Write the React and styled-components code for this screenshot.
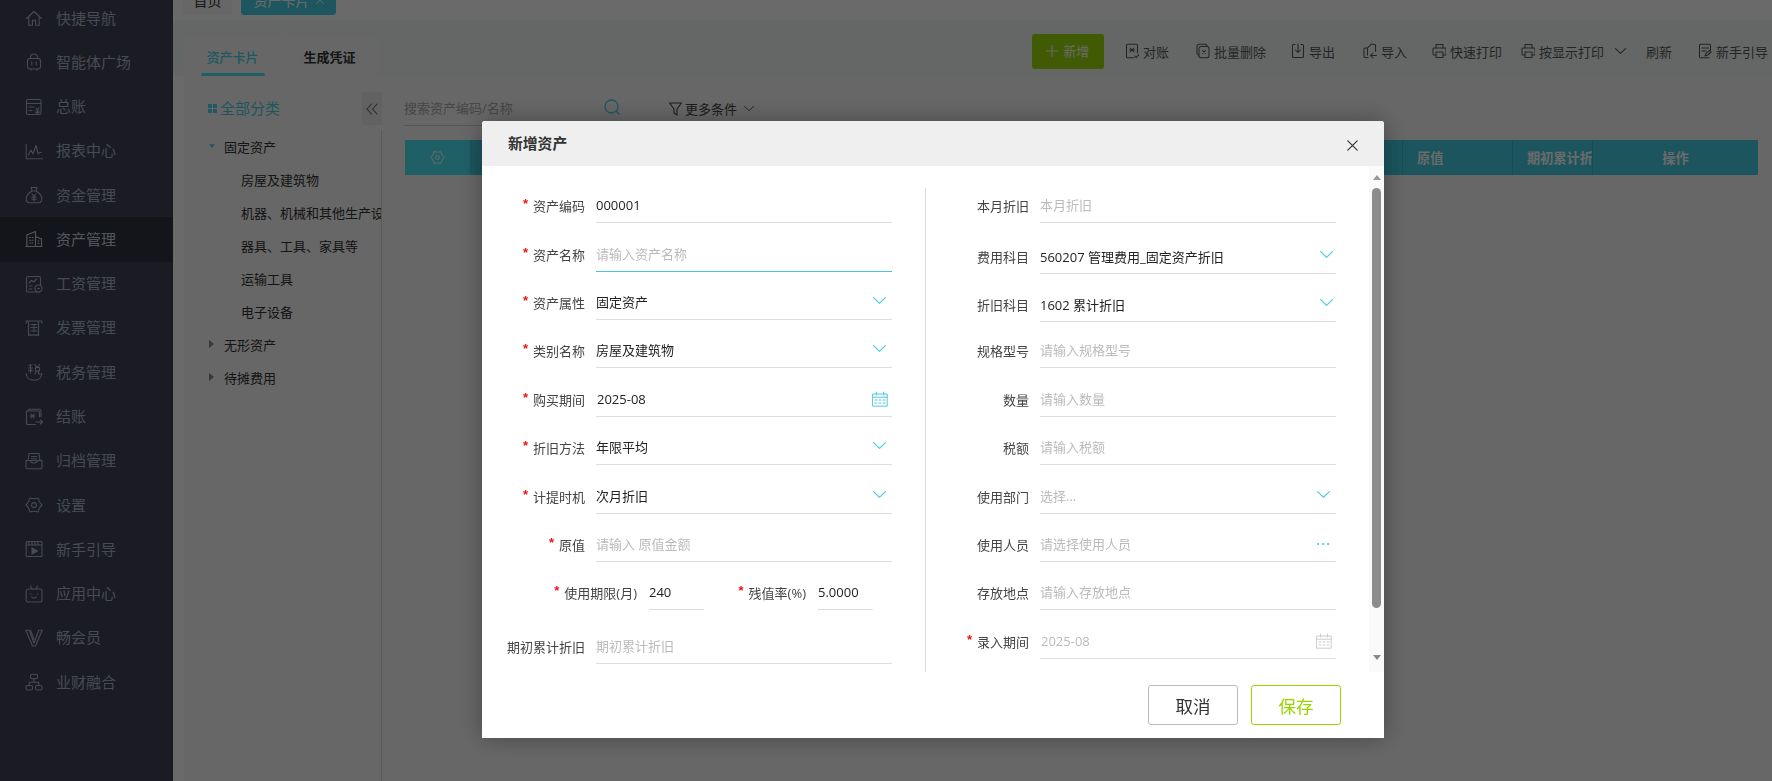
import React from "react";
import styled, { createGlobalStyle } from "styled-components";

const Global = createGlobalStyle`
  html, body { margin: 0; padding: 0; height: 100%; overflow: hidden; background: #fff; }
  * { box-sizing: border-box; }
  body { font-family: "Open Sans", "Noto Sans CJK SC", "Noto Sans", sans-serif; font-size: 13px; color: #333; }
`;

const Page = styled.div`
  display: flex;
  width: 1772px;
  height: 781px;
  overflow: hidden;
`;

const Sidebar = styled.nav`
  width: 173px;
  flex: none;
  background: #3f4154;
  overflow: hidden;
`;
const NavList = styled.ul`
  list-style: none;
  margin: -4px 0 0;
  padding: 0;
`;
const NavItem = styled.li`
  height: 44.27px;
  display: flex;
  align-items: center;
  padding-left: 25px;
  gap: 13px;
  font-size: 15px;
  background: ${(p) => (p.$active ? "#2e3340" : "transparent")};
  color: ${(p) => (p.$active ? "#c8d2dc" : "#a9b5c2")};
`;
const NavText = styled.span`
  margin-top: -2px;
`;
const Glyph = styled.svg`
  width: ${(p) => p.$size || 18}px;
  height: ${(p) => p.$size || 18}px;
  flex: none;
  fill: none;
  stroke: currentColor;
  stroke-width: ${(p) => p.$sw || 1.1};
  stroke-linecap: round;
  stroke-linejoin: round;
`;

const Main = styled.main`
  flex: 1;
  min-width: 0;
  display: flex;
  flex-direction: column;
  background: #fff;
`;
const TopStrip = styled.div`
  height: 20px;
  flex: none;
  display: flex;
  align-items: flex-end;
  gap: 9px;
  padding: 0 0 5px 10px;
  overflow: hidden;
  background: #fff;
`;
const PageTab = styled.div`
  height: 34px;
  flex: none;
  width: ${(p) => p.$w}px;
  padding-top: 4px;
  display: flex;
  align-items: center;
  justify-content: center;
  gap: 6px;
  font-size: 14px;
  border-radius: 0 0 3px 3px;
  background: ${(p) => (p.$on ? "#46cfe2" : "#f8f8f8")};
  color: ${(p) => (p.$on ? "#fff" : "#333")};
`;
const Band = styled.div`
  height: 56px;
  flex: none;
  display: flex;
  padding-left: 11px;
  background: #f2f7f5;
`;
const Tabs = styled.div`
  display: flex;
  align-self: flex-end;
`;
const SubTab = styled.div`
  position: relative;
  width: 97px;
  height: 39px;
  display: flex;
  align-items: center;
  justify-content: center;
  padding-bottom: 1px;
  background: #f8f8f8;
  border-radius: 6px 6px 0 0;
  font-size: 13px;
  color: ${(p) => (p.$on ? "#49d4e6" : "#333")};
  font-weight: ${(p) => (p.$on ? 500 : 700)};
  &::after {
    content: "";
    display: ${(p) => (p.$on ? "block" : "none")};
    position: absolute;
    left: 17px;
    right: 16px;
    bottom: 0;
    height: 3px;
    border-radius: 2px;
    background: #46e6f5;
  }
`;
const Toolbar = styled.div`
  margin-left: auto;
  display: flex;
  align-items: flex-start;
  padding: 14px 4px 0 0;
  color: #585858;
`;
const AddButton = styled.button`
  width: 72px;
  height: 35px;
  border: 0;
  border-radius: 3px;
  background: #98d900;
  color: #fff;
  font: inherit;
  font-size: 13px;
  display: flex;
  align-items: center;
  justify-content: center;
  gap: 5px;
  padding: 0 0 2px;
  margin-right: 1px;
  opacity: 0.95;
`;
const Tool = styled.div`
  height: 35px;
  display: flex;
  align-items: center;
  gap: 4px;
  padding-bottom: 1px;
  margin-left: ${(p) => p.$ml}px;
  white-space: nowrap;
  font-size: 13px;
`;
const ToolGap = styled.span`
  width: ${(p) => p.$w}px;
`;

const Card = styled.section`
  flex: 1;
  min-height: 0;
  margin-left: 11px;
  display: flex;
  background: #f7f7f7;
`;
const TreePanel = styled.aside`
  width: 198px;
  flex: none;
  display: flex;
  flex-direction: column;
  padding-top: 16px;
`;
const TreeHead = styled.div`
  height: 33px;
  flex: none;
  display: flex;
  align-items: center;
  padding-left: 24px;
  gap: 3px;
  font-size: 15px;
  color: #48cfe0;
`;
const TreeTitle = styled.span`
  margin-top: -2px;
`;
const GridDots = styled.i`
  width: 9px;
  height: 9px;
  flex: none;
  background:
    linear-gradient(#48d8ea, #48d8ea) 0 0 / 4px 4px no-repeat,
    linear-gradient(#48d8ea, #48d8ea) 100% 0 / 4px 4px no-repeat,
    linear-gradient(#48d8ea, #48d8ea) 0 100% / 4px 4px no-repeat,
    linear-gradient(#48d8ea, #48d8ea) 100% 100% / 4px 4px no-repeat;
`;
const Collapse = styled.div`
  margin-left: auto;
  width: 20px;
  height: 33px;
  display: flex;
  align-items: center;
  justify-content: center;
  border-radius: 3px 0 0 3px;
  background: #e9ecea;
  color: #666;
`;
const TreeBody = styled.div`
  flex: 1;
  margin-top: 5px;
  border-right: 1px solid #d6d6d6;
  overflow: hidden;
`;
const TreeRow = styled.div`
  height: 33px;
  display: flex;
  align-items: center;
  white-space: nowrap;
  padding-left: ${(p) => (p.$child ? 57 : 24)}px;
  padding-bottom: 1px;
  font-size: 13px;
  color: #333;
`;
const Caret = styled.span`
  width: 16px;
  flex: none;
  display: flex;
  align-items: center;
  padding-left: 1px;
  color: ${(p) => (p.$open ? "#46cfe2" : "#888")};
`;
const Content = styled.div`
  flex: 1;
  min-width: 0;
  display: flex;
  flex-direction: column;
  padding: 16px 14px 0 22px;
`;
const FilterBar = styled.div`
  height: 34px;
  flex: none;
  display: flex;
  align-items: center;
`;
const SearchBox = styled.div`
  width: 226px;
  height: 34px;
  padding-bottom: 3px;
  display: flex;
  align-items: center;
  justify-content: space-between;
  border-bottom: 1px solid #cfcfcf;
  color: #aaa;
  white-space: nowrap;
`;
const SearchIcon = styled.span`
  display: flex;
  margin-right: 10px;
  color: #46cfe2;
`;
const More = styled.div`
  margin-left: 39px;
  padding-bottom: 1px;
  display: flex;
  align-items: center;
  gap: 3px;
  color: #444;
`;
const TableHead = styled.div`
  margin: 14px 0 0 1px;
  height: 35px;
  flex: none;
  display: flex;
  background: #43cde1;
  color: #fff;
  font-weight: 700;
  font-size: 13.2px;
`;
const HeadCell = styled.div`
  width: ${(p) => p.$w}px;
  flex: ${(p) => (p.$grow ? 1 : "none")};
  display: flex;
  align-items: center;
  justify-content: ${(p) => (p.$center ? "center" : "flex-start")};
  padding-left: ${(p) => (p.$center ? 0 : 14)}px;
  border-right: ${(p) => (p.$noline ? "0" : "1px solid rgba(0,0,0,.12)")};
  overflow: hidden;
  white-space: nowrap;
  background: ${(p) => p.$bg || "transparent"};
`;

const Overlay = styled.div`
  position: fixed;
  inset: 0;
  background: rgba(0, 0, 0, 0.585);
`;
const Modal = styled.div`
  position: fixed;
  left: 482px;
  top: 121px;
  width: 902px;
  height: 617px;
  display: flex;
  flex-direction: column;
  background: #fff;
  border-radius: 3px 3px 0 0;
  box-shadow: 0 0 24px rgba(0, 0, 0, 0.32);
`;
const ModalHead = styled.header`
  height: 45px;
  flex: none;
  display: flex;
  align-items: center;
  justify-content: space-between;
  padding: 0 26px;
  background: #efefef;
  border-radius: 3px 3px 0 0;
`;
const ModalTitle = styled.h2`
  margin: 0 0 3px;
  font-size: 14.8px;
  font-weight: 700;
  color: #333;
`;
const CloseBtn = styled.span`
  display: flex;
  margin-top: 4px;
  color: #333;
`;
const ModalBody = styled.div`
  flex: none;
  height: 506px;
  display: flex;
  overflow: hidden;
`;
const Column = styled.div`
  width: ${(p) => p.$w}px;
  flex: none;
  margin-top: 22px;
  border-right: ${(p) => (p.$line ? "1px solid #ddd" : "0")};
`;
const Row = styled.div`
  height: ${(p) => p.$h}px;
  display: flex;
  align-items: flex-end;
`;
const Label = styled.label`
  width: ${(p) => p.$w || 103}px;
  height: 32px;
  flex: none;
  display: flex;
  align-items: center;
  justify-content: flex-end;
  padding-bottom: 3px;
  font-size: 13px;
  color: #444;
  white-space: nowrap;
`;
const Star = styled.span`
  color: #f01010;
  font-family: "Liberation Sans", sans-serif;
  font-size: 13px;
  font-weight: 700;
  margin-right: 5px;
  position: relative;
  top: -2px;
`;
const Field = styled.div`
  width: ${(p) => p.$w || 296}px;
  height: 32px;
  flex: none;
  margin-left: ${(p) => p.$ml || 11}px;
  padding-left: ${(p) => (p.$pad ? 1 : 0)}px;
  padding-bottom: ${(p) => (p.$low ? 2 : 4)}px;
  display: flex;
  align-items: center;
  justify-content: space-between;
  border-bottom: 1px solid ${(p) => (p.$focus ? "#4cc3da" : "#ddd")};
  color: ${(p) => (p.$ph ? "#bbb" : "#222")};
  font-size: 13px;
  white-space: nowrap;
`;
const Trail = styled.span`
  display: flex;
  margin-right: ${(p) => p.$r}px;
  margin-top: ${(p) => p.$t ?? -2}px;
  color: ${(p) => p.$c || "#4fcbe0"};
`;
const Scroll = styled.div`
  width: 15px;
  flex: none;
  display: flex;
  flex-direction: column;
  align-items: center;
  padding-top: 9px;
  background: #fafafa;
`;
const Arrow = styled.i`
  width: 0;
  height: 0;
  border-left: 4.5px solid transparent;
  border-right: 4.5px solid transparent;
  ${(p) => (p.$down ? "border-top: 5px solid #888; margin-top: 47px;" : "border-bottom: 5px solid #999;")}
`;
const Thumb = styled.div`
  width: 9px;
  height: 420px;
  margin-top: 8px;
  border-radius: 5px;
  background: #8c8c8c;
`;
const Footer = styled.footer`
  flex: 1;
  display: flex;
  justify-content: flex-end;
  gap: 13px;
  padding: 13px 43px 0 0;
`;
const Btn = styled.button`
  width: 90px;
  height: 40px;
  border-radius: 3px;
  background: #fff;
  font: inherit;
  font-size: 17.5px;
  padding: 0;
  color: ${(p) => (p.$primary ? "#98d400" : "#333")};
  border: 1px solid ${(p) => (p.$primary ? "#98d400" : "#bbb")};
`;

const gearPath = "M5 2Q9 3.4 13 2Q13.8 6 17 9Q13.8 12 13 16Q9 14.6 5 16Q4.2 12 1 9Q4.2 6 5 2Z";

const navIcons = {
  home: <><path d="M1.5 9.5 9 2.5l7.5 7"/><path d="M3.8 8v8.2h3.6v-5h3.2v5h3.6V8"/></>,
  bot: <><rect x="2.5" y="5.5" width="13" height="10.5" rx="2.5"/><path d="M5.5 5.5V4a3.5 3 0 0 1 7 0v1.5M6.8 9v3M11.2 9v3M6 16v1.3M12 16v1.3"/></>,
  ledger: <><rect x="1.5" y="1.5" width="14.5" height="15" rx="1.5"/><path d="M1.5 5.5h14.5M4 9h5M4 12.5h3"/><path d="m11 10 1.5 1.7L14 10M12.5 11.7V16M10.8 13h3.4M10.8 14.6h3.4"/></>,
  report: <><path d="M1.2 2v14.8h16.6"/><path d="M3.5 13 6 8l2 4 3-8.5 2.2 8.5 1.3-1.5h2"/></>,
  bag: <><path d="M6 1.5h6l-1 3.5H7zM7 5C3.5 7 1.2 10 1.2 13c0 2.5 1.5 3.7 3.5 3.7h8.6c2 0 3.5-1.2 3.5-3.7 0-3-2.3-6-5.8-8"/><path d="m7 8 2 2.4L11 8M9 10.4V15M6.8 11.3h4.4M6.8 13.2h4.4"/></>,
  building: <><path d="M1.8 16.5V5L10.5 1.5v15zM10.5 6.5l6 2.5v7.5h-6M1 16.5h16"/><path d="M4.5 7.5h1M7 7.5h1M4.5 10.2h1M7 10.2h1M4.5 13h1M7 13h1M13 11h1M13 13.5h1"/></>,
  pay: <><rect x="1.5" y="1.5" width="14" height="15.5" rx="1.5"/><path d="m4 8 2.5-2.5 2 1.5 3-3M4 11h3M4 14h3"/><circle cx="13.5" cy="13.5" r="3.5" fill="#3f4154"/><path d="M12.3 13.5h2.4"/></>,
  invoice: <><path d="M1.2 4V2h15.6v2M3.5 2v14.5l1.5-1 1.5 1 2-1 2 1 2-1 1 1V2"/><path d="M6 5.5h6M6 8.5h6M9 5.5v7M6 12h6"/></>,
  tax: <><path d="M1.2 10.5c0 4 3 6.8 7.8 6.8s7.8-2.8 7.8-6.8"/><path d="M4 2.5 7 1.7M5.5 2v8M3.5 5h4M3.5 8l2-1M7.5 8 5.5 7M10 1.5l1 2 2.5-.2.9-1.8M10.5 4.5h4V8h-4zM11.5 8 10 11M13.5 8v3h2"/></>,
  close: <><path d="M3.5 1.2h11a1.5 1.5 0 0 1 1.5 1.5v6M3.5 1.2V3M1.5 3h12a1 1 0 0 1 1 1v5M1.5 3v12.5a1 1 0 0 0 1 1h8"/><path d="m6 6 3 4M9 6l-3 4M5 8h5"/><path d="M11 14h6.5M15.5 12l2 2-2 2"/></>,
  archive: <><path d="M4 1.5h10l1 7H3z"/><path d="M6.5 4.5h5M6.5 6.7h5"/><path d="M1 8.5h4.5a3.5 2.5 0 0 0 7 0H17V15a1.7 1.7 0 0 1-1.7 1.7H2.7A1.7 1.7 0 0 1 1 15z"/></>,
  gear: <><path d={gearPath}/><circle cx="9" cy="9" r="2.4"/></>,
  clapper: <><rect x="1.2" y="1.5" width="15.8" height="15" rx="1"/><path d="M1.2 5H17M3.5 1.5l1 3.5M6.5 1.5l1 3.5M9.5 1.5l1 3.5M12.5 1.5l1 3.5"/><path d="M7 8v6l5.5-3z" fill="currentColor"/></>,
  tv: <><rect x="1.2" y="4" width="15.8" height="13" rx="2"/><path d="M5.5 1 7 4M12.5 1 11 4M5.5 9h.4M12.2 9h.4M6.5 12c1 1.4 4 1.4 5 0"/></>,
  vip: <><path d="M.8 1.2h3.4L9 14l4.8-12.8h3.4L10.5 17h-3z"/><path d="m5.5 1.2 3.5 9.3"/></>,
  tree: <><rect x="5.5" y="1.2" width="7" height="4.5" rx="1.5"/><rect x="1" y="12.5" width="6.5" height="4.5" rx="1.5"/><rect x="10.5" y="12.5" width="6.5" height="4.5" rx="1.5"/><path d="M9 5.7v3.6M4.2 12.5V9.3h9.6v3.2"/></>,
};

const NAV = [
  ["home", "快捷导航"], ["bot", "智能体广场"], ["ledger", "总账"], ["report", "报表中心"],
  ["bag", "资金管理"], ["building", "资产管理"], ["pay", "工资管理"], ["invoice", "发票管理"],
  ["tax", "税务管理"], ["close", "结账"], ["archive", "归档管理"], ["gear", "设置"],
  ["clapper", "新手引导"], ["tv", "应用中心"], ["vip", "畅会员"], ["tree", "业财融合"],
];

const Nav18 = ({ name }) => <Glyph viewBox="0 0 18 18">{navIcons[name]}</Glyph>;

const Chevron = ({ w = 13, h = 7, sw = 1.2 }) => (
  <Glyph style={{ width: w, height: h }} viewBox="0 0 13 7" preserveAspectRatio="none" $sw={sw}>
    <path d="M.6.6 6.5 6.4 12.4.6" />
  </Glyph>
);

const toolIcons = {
  check: <><path d="M12.5 10V2.5a1.2 1.2 0 0 0-1.2-1.2H2.7a1.2 1.2 0 0 0-1.2 1.2v11a1.2 1.2 0 0 0 1.2 1.2h6"/><path d="M5 5l4 4M9 5 5 9M4.5 7h5M9.5 13l1.7 1.7 2.5-3"/></>,
  del: <><rect x="1" y="1.2" width="10" height="11" rx="2"/><rect x="3" y="3.5" width="10" height="11.2" rx="2" fill="#f2f7f5"/><path d="m6.5 7.5 3 3M9.5 7.5l-3 3"/></>,
  exp: <><path d="M4 1.5H2.5a1 1 0 0 0-1 1v11a1 1 0 0 0 1 1h9a1 1 0 0 0 1-1v-11a1 1 0 0 0-1-1H10"/><path d="M7 1v8M4.5 7 7 9.5 9.5 7"/></>,
  imp: <><path d="M4.5 12V5L8 1.3h3.5a1 1 0 0 1 1 1v6"/><path d="M4.5 5H2a1 1 0 0 0-1 1v7.500a1 1 0 0 0 1 1h3"/><path d="M13.5 12.5h-6M10 10l-2.500 2.500L10 15"/></>,
  print: <><path d="M4 5V1.5h7V5"/><path d="M4 12H2a1 1 0 0 1-1-1V6a1 1 0 0 1 1-1h11a1 1 0 0 1 1 1v5a1 1 0 0 1-1 1h-2"/><rect x="4" y="9" width="7" height="5.5"/></>,
  guide: <><path d="M11 14.700H2.500a1 1 0 0 1-1-1V2.300a1 1 0 0 1 1-1h9a1 1 0 0 1 1 1v5"/><path d="M4 5h6.500M4 8h4M7 13l1-2.700 3.500-3 1.700 1.700-3.500 3z"/></>,
};
const Tool14 = ({ name }) => <Glyph viewBox="0 0 14 16" style={{ width: 14, height: 16 }} $sw={1.05}>{toolIcons[name]}</Glyph>;

const Calendar = () => (
  <Glyph viewBox="0 0 16 16" $size={16} $sw={1}>
    <path d="M.8 3h14.4v12.2H.8zM.8 6.200h14.400M4.500 1v3M11.500 1v3M3 9h2M7 9h2M11 9h2M3 12h2M7 12h2M11 12h2" />
  </Glyph>
);

const Req = ({ children, w }) => (
  <Label $w={w}><Star>*</Star>{children}</Label>
);

const leftRows = [
  [35, "资产编码", "000001", 1],
  [49, "资产名称", "请输入资产名称", 1, "focus"],
  [48, "资产属性", "固定资产", 1, "sel"],
  [48, "类别名称", "房屋及建筑物", 1, "sel"],
  [49, "购买期间", "2025-08", 1, "date"],
  [48, "折旧方法", "年限平均", 1, "sel"],
  [49, "计提时机", "次月折旧", 1, "sel"],
  [48, "原值", "请输入 原值金额", 1, "ph"],
];
const rightRows = [
  [35, "本月折旧", "本月折旧", 0, "ph"],
  [51, "费用科目", "560207 管理费用_固定资产折旧", 0, "sel4"],
  [48, "折旧科目", "1602 累计折旧", 0, "sel4"],
  [46, "规格型号", "请输入规格型号", 0, "ph"],
  [49, "数量", "请输入数量", 0, "ph"],
  [48, "税额", "请输入税额", 0, "ph"],
  [49, "使用部门", "选择...", 0, "selph"],
  [48, "使用人员", "请选择使用人员", 0, "dots"],
  [48, "存放地点", "请输入存放地点", 0, "ph"],
  [49, "录入期间", "2025-08", 1, "dateoff"],
];

const FormRow = ({ h, label, value, req, kind }) => {
  const ph = ["focus", "ph", "selph", "dots", "dateoff"].includes(kind);
  const sel = kind === "sel" || kind === "selph";
  return (
    <Row $h={h}>
      {req ? <Req>{label}</Req> : <Label>{label}</Label>}
      <Field $ph={ph} $focus={kind === "focus"} $pad={kind === "date" || kind === "dateoff"} $low={kind === "sel4"}>
        <span>{value}</span>
        {sel && <Trail $r={6}><Chevron /></Trail>}
        {kind === "sel4" && <Trail $r={3} $t={-4}><Chevron /></Trail>}
        {kind === "date" && <Trail $r={4} $t={1}><Calendar /></Trail>}
        {kind === "dateoff" && <Trail $r={4} $c="#ccc" $t={1}><Calendar /></Trail>}
        {kind === "dots" && (
          <Trail $r={6} $t={1}>
            <Glyph viewBox="0 0 14 4" style={{ width: 14, height: 4 }} $sw={2}>
              <path d="M2 2h.2M7 2h.2M12 2h.2" />
            </Glyph>
          </Trail>
        )}
      </Field>
    </Row>
  );
};

export default function App() {
  return (
    <Page>
      <Global />
      <Sidebar>
        <NavList>
          {NAV.map(([icon, text]) => (
            <NavItem key={text} $active={text === "资产管理"}>
              <Nav18 name={icon} />
              <NavText>{text}</NavText>
            </NavItem>
          ))}
        </NavList>
      </Sidebar>
      <Main>
        <TopStrip>
          <PageTab $w={49}>首页</PageTab>
          <PageTab $w={95} $on>
            资产卡片
            <Glyph viewBox="0 0 10 10" $size={8}><path d="m1 1 8 8M9 1 1 9" /></Glyph>
          </PageTab>
        </TopStrip>
        <Band>
          <Tabs>
            <SubTab $on>资产卡片</SubTab>
            <SubTab>生成凭证</SubTab>
          </Tabs>
          <Toolbar>
            <AddButton>
              <Glyph viewBox="0 0 12 12" $size={12}><path d="M6 .5v11M.5 6h11" /></Glyph>
              新增
            </AddButton>
            <Tool $ml={20}><Tool14 name="check" />对账</Tool>
            <Tool $ml={27}><Tool14 name="del" />批量删除</Tool>
            <Tool $ml={25}><Tool14 name="exp" />导出</Tool>
            <Tool $ml={28}><Tool14 name="imp" />导入</Tool>
            <Tool $ml={25}><Tool14 name="print" />快速打印</Tool>
            <Tool $ml={19}>
              <Tool14 name="print" />按显示打印
              <ToolGap $w={3} />
              <Chevron w={11} h={6} />
            </Tool>
            <Tool $ml={20}>刷新</Tool>
            <Tool $ml={26}><Tool14 name="guide" />新手引导</Tool>
          </Toolbar>
        </Band>
        <Card>
          <TreePanel>
            <TreeHead>
              <GridDots />
              <TreeTitle>全部分类</TreeTitle>
              <Collapse>
                <Glyph viewBox="0 0 12 12" $size={12}><path d="M5.5 1 1 6l4.5 5M11 1 6.5 6l4.5 5" /></Glyph>
              </Collapse>
            </TreeHead>
            <TreeBody>
              <TreeRow>
                <Caret $open>
                  <svg width="6" height="4" viewBox="0 0 8 5"><path d="M0 0h8L4 5z" fill="currentColor" /></svg>
                </Caret>
                固定资产
              </TreeRow>
              <TreeRow $child>房屋及建筑物</TreeRow>
              <TreeRow $child>机器、机械和其他生产设备</TreeRow>
              <TreeRow $child>器具、工具、家具等</TreeRow>
              <TreeRow $child>运输工具</TreeRow>
              <TreeRow $child>电子设备</TreeRow>
              <TreeRow>
                <Caret><svg width="5" height="8" viewBox="0 0 5 8"><path d="M0 0l5 4-5 4z" fill="currentColor" /></svg></Caret>
                无形资产
              </TreeRow>
              <TreeRow>
                <Caret><svg width="5" height="8" viewBox="0 0 5 8"><path d="M0 0l5 4-5 4z" fill="currentColor" /></svg></Caret>
                待摊费用
              </TreeRow>
            </TreeBody>
          </TreePanel>
          <Content>
            <FilterBar>
              <SearchBox>
                搜索资产编码/名称
                <SearchIcon>
                  <Glyph viewBox="0 0 16 16" $size={16} $sw={1.3}>
                    <circle cx="7.5" cy="7.5" r="6.5" /><path d="m12.3 12.3 2.700 2.700" />
                  </Glyph>
                </SearchIcon>
              </SearchBox>
              <More>
                <Glyph viewBox="0 0 13 14" style={{ width: 13, height: 14 }} $sw={1.1}>
                  <path d="M.6 1h11.800L8 7v6L5 11V7z" />
                </Glyph>
                更多条件
                <ToolGap $w={1} />
                <Chevron w={10} h={5} />
              </More>
            </FilterBar>
            <TableHead>
              <HeadCell $w={66} $center $bg="#4be6f5">
                <Glyph viewBox="0 0 18 18" $size={15} $sw={1.2}>{navIcons.gear}</Glyph>
              </HeadCell>
              <HeadCell $grow $w={1} />
              <HeadCell $w={110}>原值</HeadCell>
              <HeadCell $w={80}>期初累计折旧</HeadCell>
              <HeadCell $w={165} $center $noline>操作</HeadCell>
            </TableHead>
          </Content>
        </Card>
      </Main>

      <Overlay />

      <Modal role="dialog" aria-label="新增资产">
        <ModalHead>
          <ModalTitle>新增资产</ModalTitle>
          <CloseBtn>
            <Glyph viewBox="0 0 11 11" $size={11} $sw={1.2}><path d="m.8.8 9.4 9.4M10.2.8.8 10.2" /></Glyph>
          </CloseBtn>
        </ModalHead>
        <ModalBody>
          <Column $w={444} $line>
            {leftRows.map(([h, label, value, req, kind]) => (
              <FormRow key={label} h={h} label={label} value={value} req={req} kind={kind} />
            ))}
            <Row $h={48}>
              <Req w={155}>使用期限(月)</Req>
              <Field $w={55} $ml={12}><span>240</span></Field>
              <Req w={102}>残值率(%)</Req>
              <Field $w={55} $ml={12}><span>5.0000</span></Field>
            </Row>
            <FormRow h={54} label="期初累计折旧" value="期初累计折旧" kind="ph" />
          </Column>
          <Column $w={443}>
            {rightRows.map(([h, label, value, req, kind]) => (
              <FormRow key={label} h={h} label={label} value={value} req={req} kind={kind} />
            ))}
          </Column>
          <Scroll>
            <Arrow />
            <Thumb />
            <Arrow $down />
          </Scroll>
        </ModalBody>
        <Footer>
          <Btn>取消</Btn>
          <Btn $primary>保存</Btn>
        </Footer>
      </Modal>
    </Page>
  );
}
